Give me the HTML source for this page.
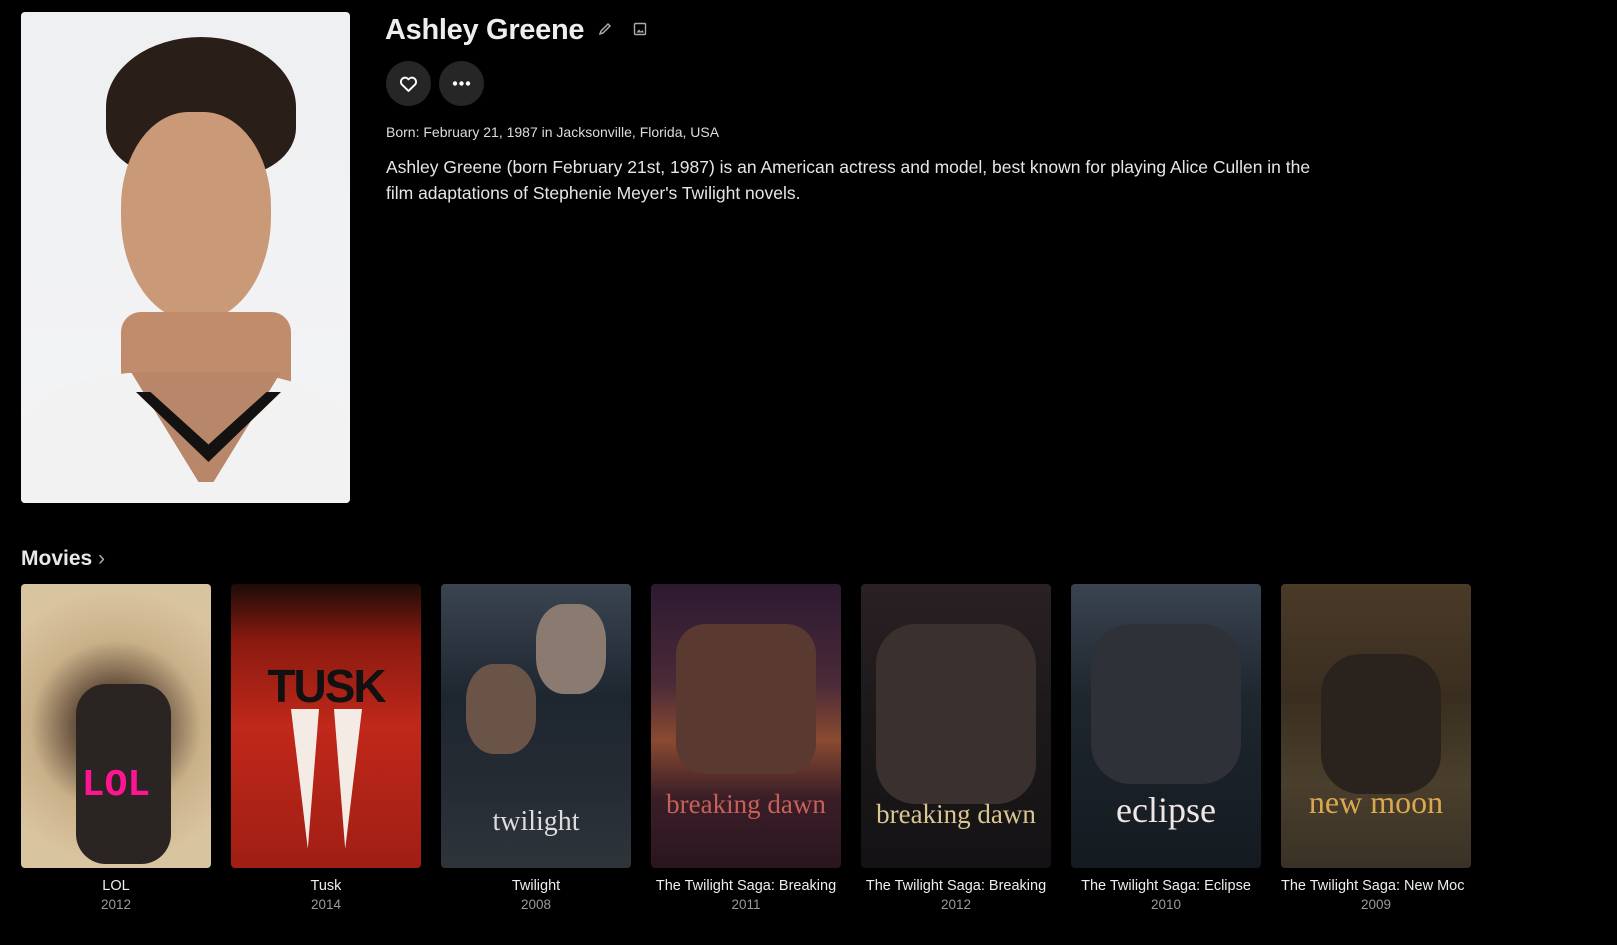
<!DOCTYPE html>
<html><head><meta charset="utf-8"><style>
*{margin:0;padding:0;box-sizing:border-box}
body{width:1617px;height:945px;background:#000;color:#fff;font-family:"Liberation Sans",sans-serif;overflow:hidden;position:relative}
.prof{position:absolute;left:21px;top:12px;width:329px;height:491px;border-radius:4px;overflow:hidden;background:linear-gradient(180deg,#eef0f2,#f4f4f6)}
h1{position:absolute;left:385px;top:14px;font-size:29px;font-weight:bold;color:#eee;letter-spacing:-0.3px}
.btn{position:absolute;top:61px;width:45px;height:45px;border-radius:50%;background:#262626}
.born{position:absolute;left:386px;top:124px;font-size:14px;color:#ddd}
.bio{position:absolute;left:386px;top:154px;width:955px;font-size:17.5px;line-height:26px;color:#e6e6e6}
.mh{position:absolute;left:21px;top:547px;font-size:21px;font-weight:bold;color:#e8e8e8}
.card{position:absolute;top:584px;width:190px}
.p{width:190px;height:284px;border-radius:4px;overflow:hidden;position:relative}
.t{margin-top:10px;font-size:14.5px;text-align:center;white-space:nowrap;overflow:hidden;color:#eee}
.y{font-size:13.5px;text-align:center;color:#9a9a9a;margin-top:3px}
.pt{position:absolute;left:0;right:0;text-align:center;font-family:"Liberation Serif",serif}
</style></head><body>
<div class="prof">
<div style="position:absolute;left:85px;top:25px;width:190px;height:140px;border-radius:50% 50% 35% 35%;background:#2a1e18"></div>
<div style="position:absolute;left:100px;top:100px;width:150px;height:210px;border-radius:45% 45% 50% 50%;background:#c99978"></div>
<div style="position:absolute;left:100px;top:300px;width:170px;height:120px;background:#c08c6c;border-radius:20px"></div>
<div style="position:absolute;left:0;top:360px;width:329px;height:140px;background:#f2f2f2;border-radius:40% 40% 0 0"></div>
<div style="position:absolute;left:110px;top:360px;width:150px;height:110px;background:#b8876a;clip-path:polygon(0 0,100% 0,55% 100%,45% 100%)"></div>
<div style="position:absolute;left:115px;top:380px;width:145px;height:70px;background:#141210;clip-path:polygon(0 0,10% 0,50% 75%,90% 0,100% 0,50% 100%)"></div>
</div>
<h1>Ashley Greene</h1>
<svg style="position:absolute;left:598px;top:22px" width="14" height="14" viewBox="0 0 14 14"><path d="M2 12l1-3 7-7 2 2-7 7z" fill="none" stroke="#aaa" stroke-width="1.5"/></svg>
<svg style="position:absolute;left:633px;top:22px" width="14" height="14" viewBox="0 0 14 14"><rect x="1.5" y="1.5" width="11" height="11" rx="1" fill="none" stroke="#aaa" stroke-width="1.4"/><path d="M3.5 10.5l2.5-3 2 2 1.5-1.5 1.5 2.5z" fill="#aaa"/></svg>
<div class="btn" style="left:386px"><svg style="position:absolute;left:12px;top:12px" width="21" height="21" viewBox="0 0 24 24"><path d="M12 20.5l-7.8-7.6a4.8 4.8 0 0 1 7.8-5.6 4.8 4.8 0 0 1 7.8 5.6z" fill="none" stroke="#fff" stroke-width="2.2" stroke-linejoin="round"/></svg></div>
<div class="btn" style="left:439px"><svg style="position:absolute;left:13px;top:20px" width="19" height="5"><circle cx="3" cy="2.5" r="2.2" fill="#fff"/><circle cx="9.5" cy="2.5" r="2.2" fill="#fff"/><circle cx="16" cy="2.5" r="2.2" fill="#fff"/></svg></div>
<div class="born">Born: February 21, 1987 in Jacksonville, Florida, USA</div>
<div class="bio">Ashley Greene (born February 21st, 1987) is an American actress and model, best known for playing Alice Cullen in the film adaptations of Stephenie Meyer's Twilight novels.</div>
<div class="mh">Movies <span style="font-weight:normal;color:#aaa">&#8250;</span></div>

<div class="card" style="left:21px"><div class="p" style="background:radial-gradient(circle at 50% 50%,#5a4a3a 0,#6b5540 25%,#c9b089 50%,#d9c4a0 80%)"><div style="position:absolute;left:55px;top:100px;width:95px;height:180px;background:#2a2522;border-radius:30px"></div><div class="pt" style="top:180px;font-size:38px;color:#ff1493;font-family:'Liberation Mono',monospace;font-weight:bold">LOL</div></div><div class="t">LOL</div><div class="y">2012</div></div>

<div class="card" style="left:231px"><div class="p" style="background:linear-gradient(180deg,#1e0c08 0,#8a1a10 20%,#c0281a 50%,#a01e14 100%)"><div class="pt" style="top:75px;font-size:46px;font-weight:bold;color:#111;font-family:'Liberation Sans',sans-serif;letter-spacing:-2px">TUSK</div><div style="position:absolute;left:60px;top:125px;width:28px;height:140px;background:#f4ece4;clip-path:polygon(0 0,100% 0,60% 100%)"></div><div style="position:absolute;left:103px;top:125px;width:28px;height:140px;background:#f4ece4;clip-path:polygon(0 0,100% 0,40% 100%)"></div></div><div class="t">Tusk</div><div class="y">2014</div></div>

<div class="card" style="left:441px"><div class="p" style="background:linear-gradient(180deg,#3a4450 0,#1e2630 40%,#252b33 70%,#2e343a 100%)"><div style="position:absolute;left:95px;top:20px;width:70px;height:90px;border-radius:40%;background:#8a7a70"></div><div style="position:absolute;left:25px;top:80px;width:70px;height:90px;border-radius:40%;background:#6a5448"></div><div class="pt" style="top:222px;font-size:28px;color:#ddd">twilight</div></div><div class="t">Twilight</div><div class="y">2008</div></div>

<div class="card" style="left:651px"><div class="p" style="background:linear-gradient(180deg,#2c1a30 0,#4a2a38 35%,#8a4a30 55%,#3a1e28 75%,#2a1620 100%)"><div style="position:absolute;left:25px;top:40px;width:140px;height:150px;background:#5a3a30;border-radius:30px"></div><div class="pt" style="top:205px;font-size:27px;color:#c8605a">breaking dawn</div></div><div class="t">The Twilight Saga: Breaking</div><div class="y">2011</div></div>

<div class="card" style="left:861px"><div class="p" style="background:linear-gradient(180deg,#2a2024 0,#1e1a1c 40%,#141214 100%)"><div style="position:absolute;left:15px;top:40px;width:160px;height:180px;background:#3a302e;border-radius:40px"></div><div class="pt" style="top:215px;font-size:27px;color:#d9c690">breaking dawn</div></div><div class="t">The Twilight Saga: Breaking</div><div class="y">2012</div></div>

<div class="card" style="left:1071px"><div class="p" style="background:linear-gradient(180deg,#3a4450 0,#1e262e 40%,#141a20 100%)"><div style="position:absolute;left:20px;top:40px;width:150px;height:160px;background:#2e3238;border-radius:40px"></div><div class="pt" style="top:205px;font-size:36px;color:#f0e6e6">eclipse</div></div><div class="t">The Twilight Saga: Eclipse</div><div class="y">2010</div></div>

<div class="card" style="left:1281px"><div class="p" style="background:linear-gradient(180deg,#4a3a28 0,#3a2e20 40%,#4a3e2c 70%,#3a3226 100%)"><div style="position:absolute;left:40px;top:70px;width:120px;height:140px;background:#2a221c;border-radius:40px"></div><div class="pt" style="top:200px;font-size:32px;color:#d9a850">new moon</div></div><div class="t" style="text-align:left">The Twilight Saga: New Moc</div><div class="y">2009</div></div>
</body></html>
